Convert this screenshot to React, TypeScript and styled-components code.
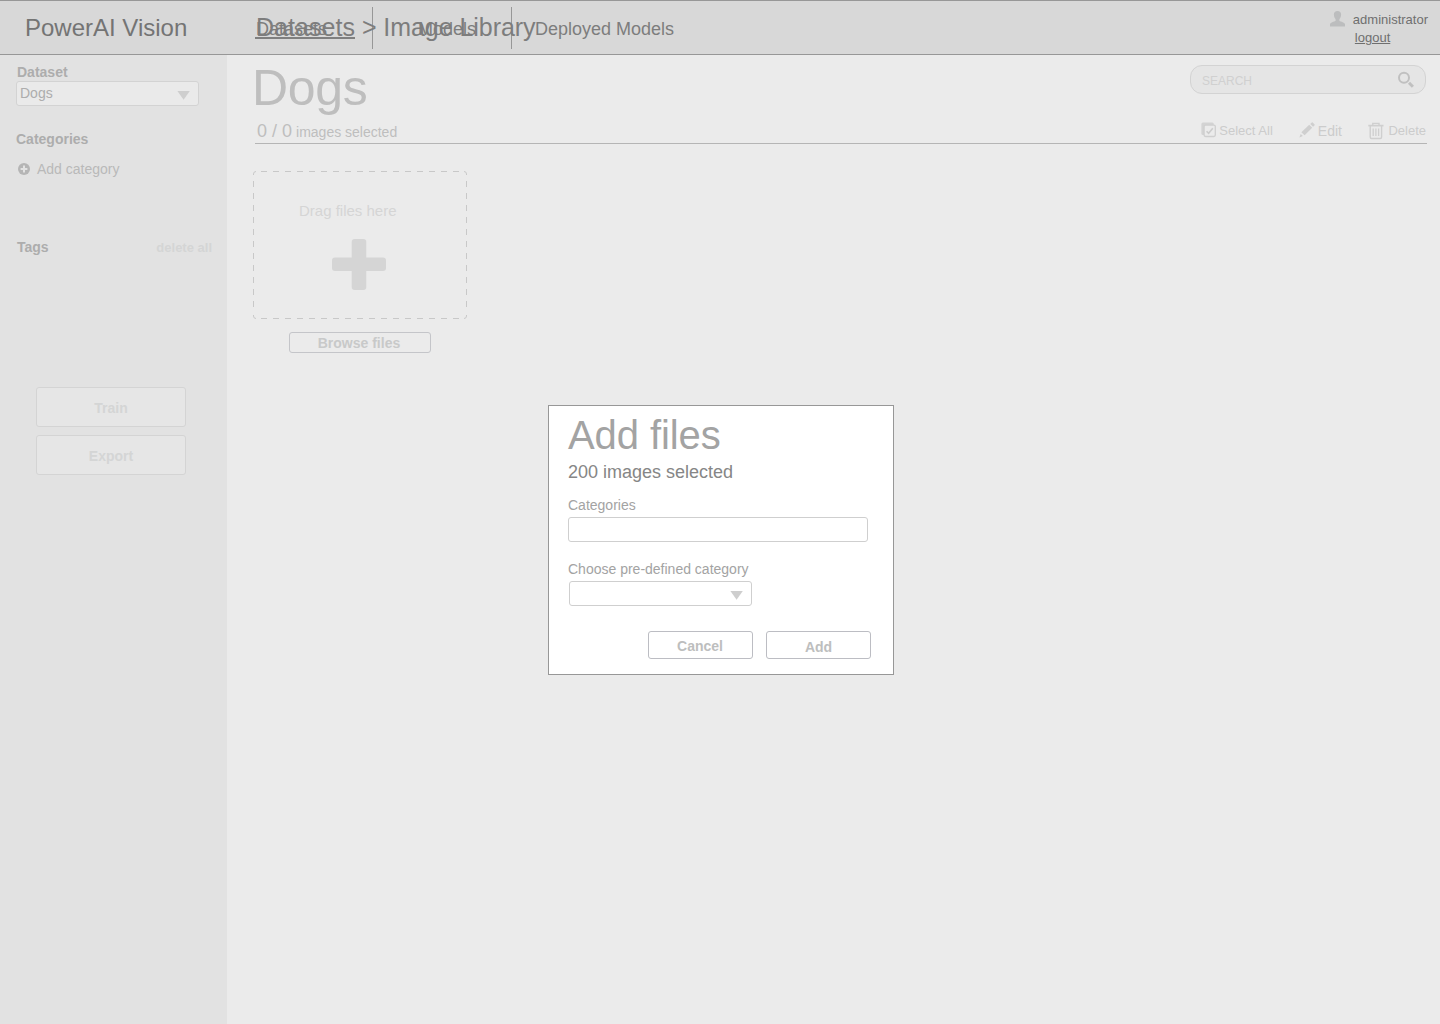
import React from "react";
import styled, { createGlobalStyle } from "styled-components";

const GlobalStyle = createGlobalStyle`
  *, *::before, *::after { box-sizing: border-box; }
  body {
    margin: 0;
    font-family: "Liberation Sans", Arial, Helvetica, sans-serif;
    background: #ebebeb;
  }
  h1, h2, h3, p { margin: 0; font-weight: 400; }
  button { font: inherit; }
`;

const Page = styled.div`
  display: flex;
  flex-direction: column;
  width: 1440px;
  height: 1024px;
  overflow: hidden;
`;

const Header = styled.header`
  position: relative;
  display: flex;
  align-items: flex-start;
  height: 55px;
  flex: none;
  background: #d8d8d8;
  border-top: 1px solid #979797;
  border-bottom: 1px solid #979797;
  color: #7d7d7d;
`;

const Brand = styled.div`
  width: 228px;
  padding: 13px 0 0 25px;
  font-size: 24px;
  line-height: 27px;
  color: #747474;
`;

const Nav = styled.nav`
  display: flex;
  padding-top: 6px;
`;

const NavItem = styled.a<{ $width?: number; $indent: number }>`
  width: ${(p) => (p.$width ? `${p.$width}px` : "auto")};
  height: 42px;
  padding: 12px 0 0 ${(p) => p.$indent}px;
  border-right: ${(p) => (p.$width ? "1px solid #979797" : "0")};
  font-size: 18px;
  line-height: 20px;
  white-space: nowrap;
`;

const Breadcrumb = styled.div`
  position: absolute;
  left: 255px;
  top: 12px;
  font-size: 25px;
  line-height: 28px;
  letter-spacing: -0.05px;
  white-space: nowrap;
  span {
    display: inline-block;
    height: 26px;
    padding-left: 1px;
    border-bottom: 2px solid #7f7f7f;
    letter-spacing: 0.04px;
  }
`;

const Account = styled.div`
  display: grid;
  grid-template-columns: 15px auto;
  column-gap: 8px;
  margin-left: auto;
  padding: 11px 12px 0 0;
  font-size: 13px;
  line-height: 15px;
  color: #6f6f6f;
  svg { display: block; margin-top: -1px; }
`;

const Logout = styled.a`
  grid-column: 2;
  margin: 3px 0 0 2px;
  text-decoration: underline;
`;

const Body = styled.div`
  display: flex;
  flex: 1;
`;

const Sidebar = styled.aside`
  display: flex;
  flex-direction: column;
  width: 227px;
  padding: 9px 15px 0 16px;
  background: #e2e2e2;
  font-size: 14px;
  line-height: 16px;
  color: #adadad;
`;

const SideTitle = styled.h3<{ $indent?: number }>`
  padding-left: ${(p) => p.$indent ?? 0}px;
  font-size: 14px;
  line-height: 16px;
  font-weight: 700;
`;

const SelectBox = styled.div<{ $muted?: boolean }>`
  display: flex;
  justify-content: space-between;
  width: 183px;
  height: 25px;
  padding: 3px 7px 0 3px;
  border: 1px solid ${(p) => (p.$muted ? "#d3d3d3" : "#cfcfcf")};
  border-radius: 3px;
  background: ${(p) => (p.$muted ? "#eaeaea" : "#fff")};
  font-size: 14px;
  line-height: 16px;
  svg { display: block; margin: 6px 0 0 auto; }
`;

const DatasetField = styled.div`
  display: flex;
  flex-direction: column;
  gap: 1px;
  margin-bottom: 25px;
`;

const AddCategory = styled.div`
  display: flex;
  gap: 7px;
  margin-top: 14px;
  padding-left: 2px;
  color: #b9b9b9;
  svg { display: block; margin-top: 2px; }
`;

const TagsRow = styled.div`
  display: flex;
  justify-content: space-between;
  margin: 62px 0 132px;
`;

const DeleteAll = styled.span`
  padding-top: 1px;
  font-size: 13px;
  line-height: 15px;
  font-weight: 700;
  color: #d4d5d5;
`;

const SideButton = styled.button`
  width: 150px;
  height: 40px;
  margin: 0 0 8px 20px;
  padding: 2px 0 0;
  border: 1px solid #d4d4d4;
  border-radius: 3px;
  background: #e6e6e6;
  font-size: 14px;
  line-height: 16px;
  font-weight: 700;
  color: #d4d5d5;
`;

const Main = styled.main`
  flex: 1;
  padding: 5px 13px 0 26px;
`;

const MainHead = styled.section`
  display: flex;
  justify-content: space-between;
  height: 84px;
  margin-left: 2px;
  border-bottom: 1px solid #b5b5b5;
  color: #bebebe;
`;

const Title = styled.h1`
  margin-left: -3px;
  font-size: 50px;
  line-height: 56px;
  letter-spacing: -0.3px;
`;

const Count = styled.p`
  padding: 5px 0 0 2px;
  font-size: 18px;
  line-height: 20px;
  small { font-size: 14px; margin-left: -1px; }
`;

const Tools = styled.div`
  display: flex;
  flex-direction: column;
  align-items: flex-end;
  padding: 5px 1px 0 0;
`;

const Search = styled.div`
  display: flex;
  justify-content: space-between;
  width: 236px;
  height: 29px;
  padding: 8px 11px 0 11px;
  border: 1px solid #d3d3d3;
  border-radius: 12px;
  background: #e5e5e5;
  font-size: 12px;
  line-height: 14px;
  color: #d0d0d0;
  svg { display: block; margin-top: -3px; }
`;

const Actions = styled.div`
  display: flex;
  margin-top: 28px;
  color: #cccccc;
`;

const Action = styled.span<{ $size: number; $gap: number; $before: number }>`
  display: flex;
  gap: ${(p) => p.$gap}px;
  margin-left: ${(p) => p.$before}px;
  font-size: ${(p) => p.$size}px;
  line-height: 18px;
  white-space: nowrap;
  svg { display: block; flex: none; }
`;

const Uploader = styled.section`
  display: flex;
  flex-direction: column;
  align-items: center;
  width: 214px;
  margin-top: 27px;
`;

const DropZone = styled.div`
  position: relative;
  display: flex;
  flex-direction: column;
  width: 214px;
  height: 148px;
  padding: 31px 0 0 46px;
  font-size: 15px;
  line-height: 17px;
  color: #d5d5d5;
`;

const DashFrame = styled.svg`
  position: absolute;
  inset: 0;
`;

const BigPlus = styled.svg`
  display: block;
  margin: 20px 0 0 33px;
`;

const BrowseButton = styled.button`
  width: 142px;
  height: 21px;
  margin-top: 13px;
  padding: 1px 2px 0 0;
  border: 1px solid #c4c5c9;
  border-radius: 3px;
  background: transparent;
  font-size: 14px;
  line-height: 16px;
  font-weight: 700;
  color: #c8c9c9;
`;

const Dialog = styled.div`
  position: absolute;
  left: 548px;
  top: 405px;
  display: flex;
  flex-direction: column;
  width: 346px;
  height: 270px;
  padding: 7px 22px 0 19px;
  border: 1px solid #979797;
  background: #fff;
  color: #a3a3a3;
`;

const DialogTitle = styled.h2`
  font-size: 40px;
  line-height: 44px;
  letter-spacing: -0.08px;
`;

const DialogSub = styled.p`
  margin-top: 5px;
  font-size: 18px;
  line-height: 20px;
  color: #868686;
`;

const FieldLabel = styled.label<{ $top: number }>`
  margin-top: ${(p) => p.$top}px;
  margin-bottom: 4px;
  font-size: 14px;
  line-height: 16px;
`;

const TextInput = styled.input`
  width: 300px;
  height: 25px;
  padding: 0 4px;
  border: 1px solid #cfcfcf;
  border-radius: 3px;
  background: #fff;
`;

const SelectSlot = styled.div`
  padding-left: 1px;
`;

const DialogActions = styled.div`
  display: flex;
  justify-content: flex-end;
  gap: 13px;
  margin-top: 25px;
`;

const DialogButton = styled.button<{ $drop: number; $shift?: number }>`
  width: 105px;
  height: 28px;
  padding: ${(p) => p.$drop}px ${(p) => p.$shift ?? 0}px 0 0;
  border: 1px solid #bcbdc3;
  border-radius: 3px;
  background: #fff;
  font-size: 14px;
  line-height: 16px;
  font-weight: 700;
  color: #bdbebe;
`;

const Caret = () => (
  <svg width="14" height="9" viewBox="0 0 14 9">
    <path d="M.4 0H12.8L6.6 8.7Z" fill="#cecece" />
  </svg>
);

const UserIcon = () => (
  <svg width="15" height="16" viewBox="0 0 15 16">
    <path
      d="M7.5 0C9.8 0 11.1 1.4 11.1 3.6C11.1 5.6 10.3 7.3 9.4 8.2V9.7C9.4 10.4 14 10.8 15 13V15.6H0V13C1 10.8 5.6 10.4 5.6 9.7V8.2C4.7 7.3 3.9 5.6 3.9 3.6C3.9 1.4 5.2 0 7.5 0Z"
      fill="#bcbdbe"
    />
  </svg>
);

const PlusCircle = () => (
  <svg width="12" height="12" viewBox="0 0 12 12">
    <circle cx="6" cy="6" r="6" fill="#b5b5b5" />
    <path d="M6 2.6V9.4M2.6 6H9.4" stroke="#e2e2e2" strokeWidth="2" />
  </svg>
);

const SearchIcon = () => (
  <svg width="17" height="17" viewBox="0 0 17 17" fill="none" stroke="#c0c0c0">
    <circle cx="7" cy="6.8" r="5" strokeWidth="2" />
    <path d="M12 11.8L15.9 15.7" strokeWidth="3" />
  </svg>
);

const SelectAllIcon = () => (
  <svg width="15" height="18" viewBox="0 0 15 18">
    <rect x=".4" y=".6" width="12.4" height="12.4" rx="1.5" fill="#d3d3d3" />
    <rect x="3.1" y="3.1" width="11.2" height="11.4" rx="1.4" fill="#ebebeb" stroke="#cfcfcf" strokeWidth="1.3" />
    <path d="M5.6 9.2L7.6 11.2L11.8 6.2" fill="none" stroke="#cccccc" strokeWidth="1.6" />
  </svg>
);

const PencilIcon = () => (
  <svg width="17" height="18" viewBox="0 0 17 18" fill="#cfcfcf">
    <path d="M10.2 2.8L13.2 5.8L5.6 13.2L2.4 10.2Z" />
    <path d="M11.2 1.9L12.8 .4Q13.2 0 13.7 .5L15.6 2.4Q16 2.8 15.6 3.3L14.1 4.8Z" />
    <path d="M1.7 11.9L3.9 14L.4 15.4Z" />
  </svg>
);

const TrashIcon = () => (
  <svg width="16" height="18" viewBox="0 0 16 18" fill="none" stroke="#cfcfcf">
    <path d="M.3 3.6H15.5" strokeWidth="1.7" />
    <path d="M4.8 3.2V1.4H11V3.2" strokeWidth="1.4" />
    <path d="M2.2 4V15Q2.2 16.5 3.6 16.5H12.2Q13.6 16.5 13.6 15V4" strokeWidth="1.4" />
    <path d="M5.2 6.4V14M7.9 6.4V14M10.6 6.4V14" strokeWidth="1.3" />
  </svg>
);

const DashBorder = () => (
  <DashFrame width="214" height="148" fill="none" stroke="#c8c8c8">
    <path d="M8 .5H206M8 147.5H206" strokeDasharray="6 6" />
    <path d="M.5 10V138M213.5 10V138" strokeDasharray="6 6" />
    <path d="M.5 4V3Q.5 .5 3 .5M211 .5Q213.5 .5 213.5 3V4M213.5 144V145Q213.5 147.5 211 147.5M3 147.5Q.5 147.5 .5 145V144" />
  </DashFrame>
);

export default function App() {
  return (
    <Page>
      <GlobalStyle />
      <Header>
        <Brand>PowerAI Vision</Brand>
        <Nav>
          <NavItem $width={145} $indent={28}>Datasets</NavItem>
          <NavItem $width={139} $indent={45}>Models</NavItem>
          <NavItem $indent={23}>Deployed Models</NavItem>
        </Nav>
        <Breadcrumb>
          <span>Datasets</span> &gt; Image Library
        </Breadcrumb>
        <Account>
          <UserIcon />
          <div>administrator</div>
          <Logout>logout</Logout>
        </Account>
      </Header>
      <Body>
        <Sidebar>
          <DatasetField>
            <SideTitle $indent={1}>Dataset</SideTitle>
            <SelectBox $muted>
              Dogs
              <Caret />
            </SelectBox>
          </DatasetField>
          <SideTitle>Categories</SideTitle>
          <AddCategory>
            <PlusCircle />
            Add category
          </AddCategory>
          <TagsRow>
            <SideTitle $indent={1}>Tags</SideTitle>
            <DeleteAll>delete all</DeleteAll>
          </TagsRow>
          <SideButton>Train</SideButton>
          <SideButton>Export</SideButton>
        </Sidebar>
        <Main>
          <MainHead>
            <div>
              <Title>Dogs</Title>
              <Count>
                0 / 0 <small>images selected</small>
              </Count>
            </div>
            <Tools>
              <Search>
                SEARCH
                <SearchIcon />
              </Search>
              <Actions>
                <Action $size={13} $gap={3} $before={0}>
                  <SelectAllIcon />
                  Select All
                </Action>
                <Action $size={14} $gap={2} $before={26}>
                  <PencilIcon />
                  Edit
                </Action>
                <Action $size={13} $gap={4} $before={26.5}>
                  <TrashIcon />
                  Delete
                </Action>
              </Actions>
            </Tools>
          </MainHead>
          <Uploader>
            <DropZone>
              <DashBorder />
              Drag files here
              <BigPlus width="54" height="51" viewBox="0 0 54 51" fill="#d5d5d5">
                <rect x="19.7" y="0" width="14.6" height="51" rx="3" />
                <rect x="0" y="18.5" width="54" height="13.6" rx="3" />
              </BigPlus>
            </DropZone>
            <BrowseButton>Browse files</BrowseButton>
          </Uploader>
        </Main>
      </Body>
      <Dialog role="dialog">
        <DialogTitle>Add files</DialogTitle>
        <DialogSub>200 images selected</DialogSub>
        <FieldLabel $top={15}>Categories</FieldLabel>
        <TextInput />
        <FieldLabel $top={19}>Choose pre-defined category</FieldLabel>
        <SelectSlot>
          <SelectBox>
            <Caret />
          </SelectBox>
        </SelectSlot>
        <DialogActions>
          <DialogButton $drop={1} $shift={1}>Cancel</DialogButton>
          <DialogButton $drop={3}>Add</DialogButton>
        </DialogActions>
      </Dialog>
    </Page>
  );
}
